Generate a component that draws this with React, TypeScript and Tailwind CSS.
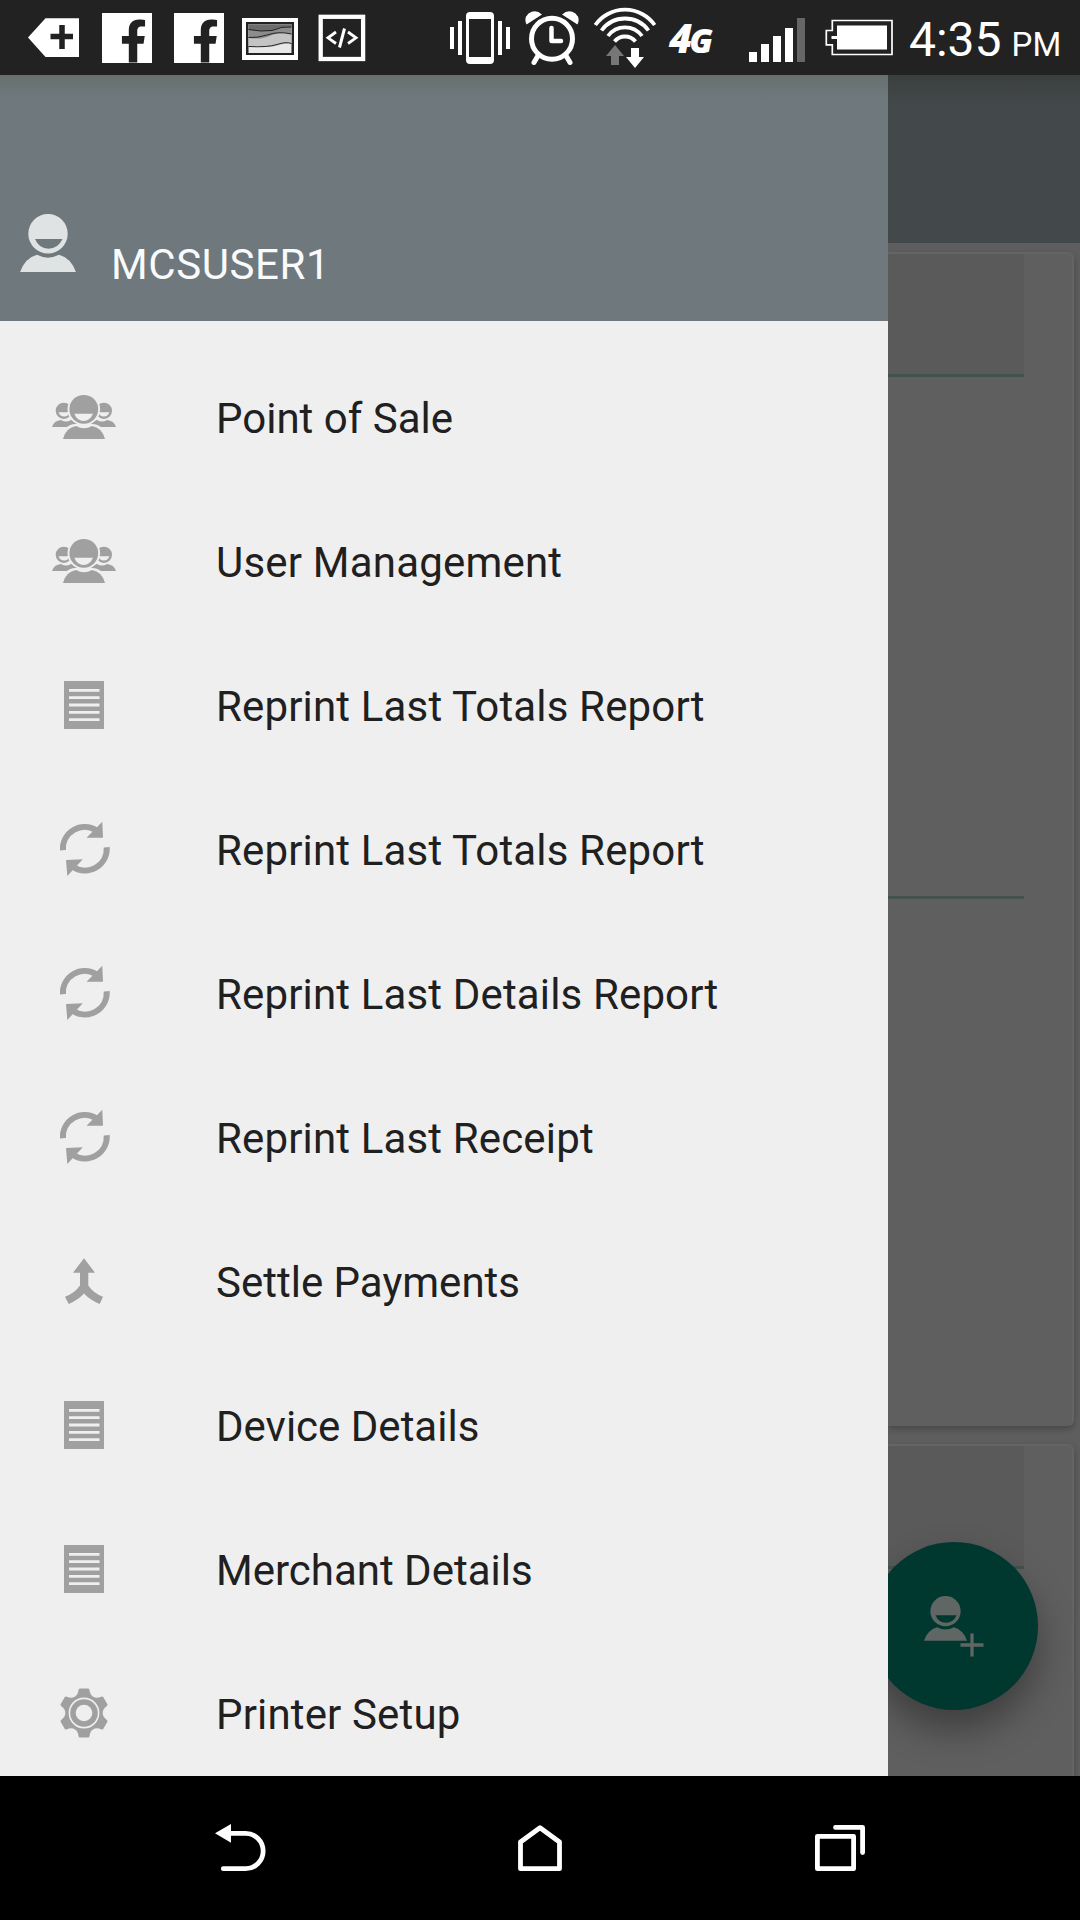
import type { ReactNode } from 'react'
import { FaFacebookF } from 'react-icons/fa'

type IconName = 'people' | 'document' | 'refresh' | 'merge' | 'gear'

const menuItems: { label: string; icon: IconName; tracking?: string }[] = [
    { label: 'Point of Sale', icon: 'people' },
    { label: 'User Management', icon: 'people', tracking: 'tracking-[0.2px]' },
    { label: 'Reprint Last Totals Report', icon: 'document', tracking: 'tracking-[0.16px]' },
    { label: 'Reprint Last Totals Report', icon: 'refresh', tracking: 'tracking-[0.16px]' },
    { label: 'Reprint Last Details Report', icon: 'refresh', tracking: 'tracking-[0.15px]' },
    { label: 'Reprint Last Receipt', icon: 'refresh', tracking: 'tracking-[0.15px]' },
    { label: 'Settle Payments', icon: 'merge' },
    { label: 'Device Details', icon: 'document' },
    { label: 'Merchant Details', icon: 'document' },
    { label: 'Printer Setup', icon: 'gear', tracking: 'tracking-[0.15px]' },
]

function PeopleIcon() {
    return (
        <>
            <path d="M4 45 Q6 38.5 13 38 Q18 41 23 38 Q30 39 31 45Z M41 45 Q42 39 49 38 Q54 41 59 38 Q66 38.5 68 45Z" />
            <circle cx="15.8" cy="28.8" r="8.1" />
            <circle cx="55.9" cy="28.8" r="8.1" />
            <path
                className="fill-[#efefef]"
                d="M10.5 30.3 H22 Q20 34.5 16.3 34.5 Q12 34.5 10.5 30.3Z M50 30.3 H61.5 Q60 34.5 55.7 34.5 Q52 34.5 50 30.3Z"
            />
            <circle className="fill-[#efefef]" cx="35.8" cy="27.3" r="16.3" />
            <path className="fill-[#efefef]" d="M12.5 59 Q15 43 26.5 42 H45 Q57 43 59.5 59Z" />
            <path d="M15 57 Q18 45.5 28 44 Q36 48.5 44 44 Q54 45.5 57 57Z" />
            <circle cx="35.8" cy="27.3" r="14.4" />
            <path className="fill-[#efefef]" d="M26.3 31.8 H45 Q42 39 35.7 39 Q29 39 26.3 31.8Z" />
        </>
    )
}

function DocumentIcon() {
    return (
        <>
            <rect x="16" y="11" width="40" height="48" />
            <path
                className="stroke-[#efefef]"
                strokeWidth="2.8"
                d="M21 20.3H51.5 M21 27.6H51.5 M21 35H51.5 M21 42.3H51.5 M21 49.6H51.5"
            />
        </>
    )
}

function RefreshIcon() {
    return (
        <>
            <path
                className="fill-none stroke-[#a0a0a0]"
                strokeWidth="6"
                d="M15 36.3 A21.7 21.7 0 0 1 48.5 16.5 M58.7 33.3 A21.7 21.7 0 0 1 25.2 53"
            />
            <path d="M54.3 7.7 L55 23.7 H38.5Z M18 46 L34.8 45.3 L19.3 62Z" />
        </>
    )
}

function MergeIcon() {
    return (
        <path d="M36 12.3 L47 26.7 H40.3 V39.5 Q45 47 55 50.7 L51.7 58 Q42 54 36 47.5 Q30 54 20.7 58 L17 50.7 Q27 47 32 39.5 V26.7 H25Z" />
    )
}

function GearIcon() {
    return (
        <>
            <circle cx="36" cy="35" r="18.3" />
            {[0, 60, 120, 180, 240, 300].map((angle) => (
                <path
                    key={angle}
                    transform={`rotate(${angle} 36 35)`}
                    d="M31.8 10.4 H40.2 Q41.2 10.5 41.5 12 Q42 17 45.5 19 L36 26 L26.5 19 Q30 17 30.5 12 Q30.8 10.5 31.8 10.4Z"
                />
            ))}
            <circle className="fill-none stroke-[#efefef]" cx="36" cy="35" r="14.6" strokeWidth="1.6" />
            <circle className="fill-[#efefef]" cx="36" cy="35" r="8.3" />
        </>
    )
}

const icons: Record<IconName, () => ReactNode> = {
    people: PeopleIcon,
    document: DocumentIcon,
    refresh: RefreshIcon,
    merge: MergeIcon,
    gear: GearIcon,
}

function UserIcon({ className }: { className: string }) {
    return (
        <svg viewBox="0 0 56 58.5" className={className} fill="currentColor">
            <path
                fillRule="evenodd"
                d="M28 0 A19.7 19.7 0 1 1 28 39.4 A19.7 19.7 0 1 1 28 0Z M15 25 H42.5 Q38 34.7 28.5 34.7 Q19 34.7 15 25Z"
            />
            <path d="M0 58.3 Q5 44 17 40.8 Q28 46.5 39 40.8 Q51 44 56 58.3Z" />
        </svg>
    )
}

function FacebookBadge() {
    return (
        <div className="mt-[13px] ml-[22px] flex h-[50px] w-[50px] shrink-0 items-end bg-white pl-[18px] text-[#222]">
            <FaFacebookF className="h-[44px] w-[27px]" />
        </div>
    )
}

function StatusBar() {
    return (
        <header className="flex h-[75px] shrink-0 items-start bg-[#222] text-white">
            <svg viewBox="28 0 52 75" className="ml-[28px] h-[75px] w-[52px] shrink-0">
                <path fill="#fff" d="M28 37.5 L45.5 18.3 H79 V57 H45.5Z" />
                <path stroke="#222" strokeWidth="5.5" d="M50.5 36.5H73 M62 25V49" />
            </svg>
            <FacebookBadge />
            <FacebookBadge />
            <svg viewBox="242 0 56 75" className="ml-[18px] h-[75px] w-[56px] shrink-0">
                <rect x="242" y="18" width="56" height="42" fill="#fff" />
                <rect x="246" y="22" width="48" height="33" fill="#222" />
                <rect x="248.5" y="24.5" width="43" height="28.5" fill="#e8e8e8" />
                <path fill="#c4c4c4" d="M248.5 24.5 H291.5 V43.5 Q285 43 278 45.5 T260 46 L248.5 46.5Z" />
                <path fill="#8c8c8c" d="M248.5 24.5 H291.5 V34 Q280 31 271 35.5 T248.5 38Z" />
                <path fill="#6c6c6c" d="M248.5 24.5 H291.5 V27 Q282 26 272 30.5 Q262 32 248.5 29.5Z" />
                <path
                    fill="none"
                    stroke="#222"
                    d="M248.5 29.5 Q262 32 272 30.5 Q282 26 291.5 27 M248.5 37.5 Q258 38 267 35 Q278 31 291.5 34 M248.5 46.5 Q268 47.5 277 44.5 T291.5 43.5"
                />
            </svg>
            <svg viewBox="318 0 48 75" className="ml-[20px] h-[75px] w-[48px] shrink-0" fill="none" stroke="#fff">
                <rect x="320.7" y="16.8" width="42.4" height="42.2" strokeWidth="4.3" />
                <path strokeWidth="2.8" d="M336 32 L328 37.8 L336 43.5 M348 32 L356 37.8 L348 43.5" />
                <path strokeWidth="3" d="M344.5 28.5 L339.5 47.5" />
            </svg>

            <svg viewBox="450 0 60 75" className="ml-[84px] h-[75px] w-[60px] shrink-0" fill="#fff">
                <path d="M450 27h4v22h-4z M458 21h4v34h-4z M498 21h4v34h-4z M506 27h4v22h-4z" />
                <path
                    fillRule="evenodd"
                    d="M470 12 H490 Q494 12 494 16 V60 Q494 64 490 64 H470 Q466 64 466 60 V16 Q466 12 470 12Z M469 19 V57 H491 V19Z"
                />
            </svg>
            <svg viewBox="525 0 54 75" className="ml-[15px] h-[75px] w-[54px] shrink-0" fill="none" stroke="#fff">
                <circle cx="552" cy="38.7" r="20.5" strokeWidth="5" />
                <path strokeWidth="4.5" strokeLinecap="round" strokeLinejoin="round" d="M551.5 28 V41 H561" />
                <path strokeWidth="5" strokeLinecap="round" d="M537.5 56.5 L534 62.5 M566.5 56.5 L570 62.5" />
                <path
                    fill="#fff"
                    stroke="none"
                    d="M526.5 24.5 Q523.5 18 528.5 13.5 Q535.5 8.5 542 14.5Z M577.5 24.5 Q580.5 18 575.5 13.5 Q568.5 8.5 562 14.5Z"
                />
            </svg>
            <svg viewBox="593 0 64 75" className="ml-[14px] h-[75px] w-[64px] shrink-0" fill="none" stroke="#fff">
                <path
                    strokeWidth="3.8"
                    d="M595.3 25 A36.5 36.5 0 0 1 654.7 25 M601.5 30.5 A29 29 0 0 1 648.5 30.5 M608 36 A21 21 0 0 1 642 36 M614.5 41.5 A13.5 13.5 0 0 1 635.5 41.5"
                />
                <path fill="#777" stroke="none" d="M615 45 L624 56 H619 V65 H611 V56 H606Z" />
                <path fill="#fff" stroke="none" d="M635 68 L626 57 H631 V48 H639 V57 H644Z" />
            </svg>
            <div className="mt-[17px] ml-[12px] w-[46px] shrink-0 font-['Open_Sans'] text-[40px] leading-[42px] font-extrabold tracking-[-3px] whitespace-nowrap italic">
                4<span className="text-[34px]">G</span>
            </div>
            <div className="mt-[18px] ml-[34px] flex h-[44px] shrink-0 items-end gap-[4px]">
                <div className="h-[10px] w-[8px] bg-white" />
                <div className="h-[18px] w-[8px] bg-white" />
                <div className="h-[26px] w-[8px] bg-white" />
                <div className="h-[34px] w-[8px] bg-white" />
                <div className="h-[44px] w-[8px] bg-[#666]" />
            </div>
            <svg viewBox="825 0 68 75" className="ml-[20px] h-[75px] w-[68px] shrink-0">
                <path
                    fill="none"
                    stroke="#fff"
                    strokeWidth="1.7"
                    d="M832.3 20.5 H892 V54.5 H832.3 V44.8 H826.3 V30.5 H832.3Z"
                />
                <path fill="#fff" d="M837 25.5 H887 V49.5 H837 V39 H831.5 V36 H837Z" />
            </svg>
            <div className="ml-[16px] flex items-baseline leading-[79px] whitespace-nowrap">
                <span className="text-[48px]">4:35</span>
                <span className="ml-[10px] text-[33px]">PM</span>
            </div>
        </header>
    )
}

function Drawer() {
    return (
        <nav className="flex w-[888px] shrink-0 flex-col bg-[#efefef]">
            <div className="flex h-[246px] shrink-0 items-start bg-linear-to-b from-[#68716f] via-[#6f787d] via-10% to-[#6f787d] pl-5">
                <UserIcon className="mt-[138.5px] h-[58.5px] w-[56px] text-[#dfe3e4]" />
                <div className="mt-[166px] ml-[35px] text-[42px] leading-[48px] tracking-[0.6px] text-[#f8fafb]">
                    MCSUSER1
                </div>
            </div>
            <ul className="pt-[25px]">
                {menuItems.map(({ label, icon, tracking = '' }, index) => {
                    const Icon = icons[icon]
                    return (
                        <li key={index} className="flex h-36 items-center gap-24 px-12">
                            <svg viewBox="0 0 72 72" className="h-[72px] w-[72px] shrink-0" fill="#a0a0a0">
                                <Icon />
                            </svg>
                            <span className={`pt-0.5 text-[42px] leading-[48px] text-[#202020] ${tracking}`}>
                                {label}
                            </span>
                        </li>
                    )
                })}
            </ul>
        </nav>
    )
}

function DimmedPage() {
    return (
        <main className="relative flex grow flex-col overflow-hidden bg-[#5e5e5e]">
            <div className="h-[168px] shrink-0 bg-linear-to-b from-[#3c3f40] via-[#43494a] via-20% to-[#43494a]" />
            <section className="mt-[9px] mr-[6px] h-[1174px] shrink-0 rounded-r-md border-t-2 border-r-2 border-[#646464] bg-[#5f5f5f] pr-[48px] shadow-[0_3px_6px_rgba(0,0,0,0.25)]">
                <div className="h-[123px] border-b-3 border-[#40534d] bg-[#5a5a5a]" />
                <div className="h-[522px] border-b-3 border-[#43524d]" />
            </section>
            <section className="mt-[18px] mr-[6px] h-[400px] shrink-0 rounded-tr-md border-t-2 border-r-2 border-[#646464] bg-[#5f5f5f] pr-[48px] shadow-[0_3px_6px_rgba(0,0,0,0.25)]">
                <div className="h-[123px] border-b-3 border-[#46524e] bg-[#5a5a5a]" />
            </section>
            <button
                aria-label="Add user"
                className="absolute top-[1467px] left-[-18px] h-[168px] w-[168px] rounded-full bg-[#003830] shadow-[0_20px_36px_rgba(0,0,0,0.35)]"
            >
                <UserIcon className="absolute top-[53.5px] left-[54px] h-[45px] w-[43px] text-[#5f6664]" />
                <svg viewBox="0 0 24 24" className="absolute top-[91px] left-[90px] h-[24px] w-[24px]">
                    <path stroke="#5f6664" strokeWidth="3.3" d="M.5 12H23.5 M12 .5V23.5" />
                </svg>
            </button>
        </main>
    )
}

function NavigationBar() {
    return (
        <footer className="flex h-36 shrink-0 items-center bg-black pl-[215px]">
            <svg viewBox="215 1822 52 52" className="h-[52px] w-[52px]" fill="none" stroke="#fff">
                <path fill="#fff" stroke="none" d="M215 1833.3 L231 1824 V1842.7Z" />
                <path strokeWidth="4.8" strokeLinecap="round" d="M229 1833.3 H245.5 A17.7 17.7 0 0 1 245.5 1868.7 H223.3" />
            </svg>
            <svg
                viewBox="516 1822 48 52"
                className="ml-[249px] h-[52px] w-[48px]"
                fill="none"
                stroke="#fff"
                strokeWidth="4.8"
                strokeLinejoin="round"
            >
                <path d="M520.5 1842 L540 1827.7 L559.5 1842 V1868.7 H520.5Z" />
            </svg>
            <svg
                viewBox="813 1822 54 52"
                className="ml-[249px] h-[52px] w-[54px]"
                fill="none"
                stroke="#fff"
                strokeWidth="4.8"
                strokeLinejoin="round"
                strokeLinecap="round"
            >
                <rect x="817.4" y="1836.4" width="36.2" height="32.3" />
                <path d="M835.5 1827.4 H862.6 V1852.5" />
            </svg>
        </footer>
    )
}

export default function App() {
    return (
        <div className="flex h-[1920px] w-[1080px] flex-col overflow-hidden bg-black font-[Roboto,sans-serif]">
            <StatusBar />
            <div className="flex h-[1701px] shrink-0 overflow-hidden">
                <Drawer />
                <DimmedPage />
            </div>
            <NavigationBar />
        </div>
    )
}
